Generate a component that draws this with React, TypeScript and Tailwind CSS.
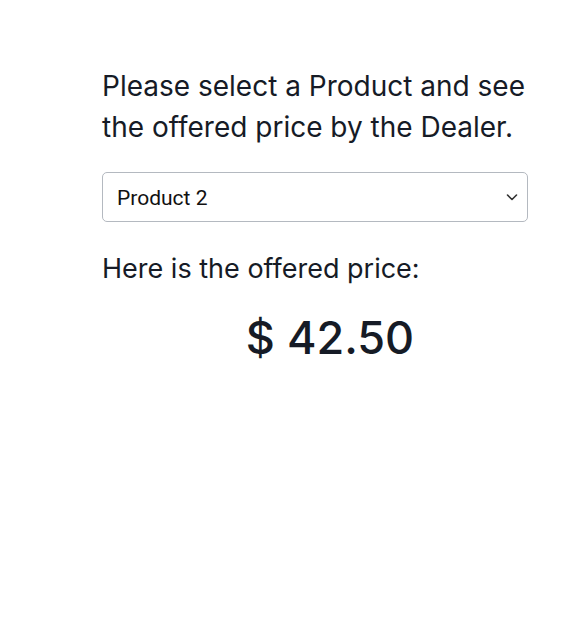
import React, { useState } from 'react';

const products = [
    { value: 'p1', label: 'Product 1', price: 19.99 },
    { value: 'p2', label: 'Product 2', price: 42.5 },
    { value: 'p3', label: 'Product 3', price: 74.0 },
];

export default function App() {
    const [selected, setSelected] = useState('p2');
    const product = products.find(p => p.value === selected);

    return (
        <div className="min-h-screen bg-white text-[#161b26]" style={{ fontFamily: 'Inter, "Noto Sans", sans-serif' }}>
            <div className="w-[426px] ml-[102px] pt-[66px]">
                <p className="text-[28px] leading-[41px]">
                    Please select a Product and see the offered price by the Dealer.
                </p>

                <div className="relative mt-[24px]">
                    <select
                        value={selected}
                        onChange={e => setSelected(e.target.value)}
                        className="w-full h-[50px] appearance-none rounded-[5px] border border-[#b4b9c0] bg-white pl-[14px] pr-10 pt-[3px] text-[21px] text-[#111] outline-none"
                        style={{ fontFamily: 'Roboto, "Liberation Sans", sans-serif' }}
                    >
                        {products.map(p => (
                            <option key={p.value} value={p.value}>{p.label}</option>
                        ))}
                    </select>
                    <svg
                        className="pointer-events-none absolute right-[8px] top-1/2 -translate-y-1/2 w-[16px] h-[16px]"
                        viewBox="0 0 16 16"
                        fill="none"
                        stroke="#333"
                        strokeWidth="1.6"
                        strokeLinecap="round"
                        strokeLinejoin="round"
                    >
                        <path d="M3.5 6l4.5 4.5L12.5 6" />
                    </svg>
                </div>

                <p className="mt-[26px] text-[27px] leading-[41px]">Here is the offered price:</p>

                <div className="mt-[19px] flex justify-center pl-[30px]">
                    <span className="text-[45px] leading-[60px] font-medium">
                        $ {product ? product.price.toFixed(2) : '0.00'}
                    </span>
                </div>
            </div>
        </div>
    );
}
